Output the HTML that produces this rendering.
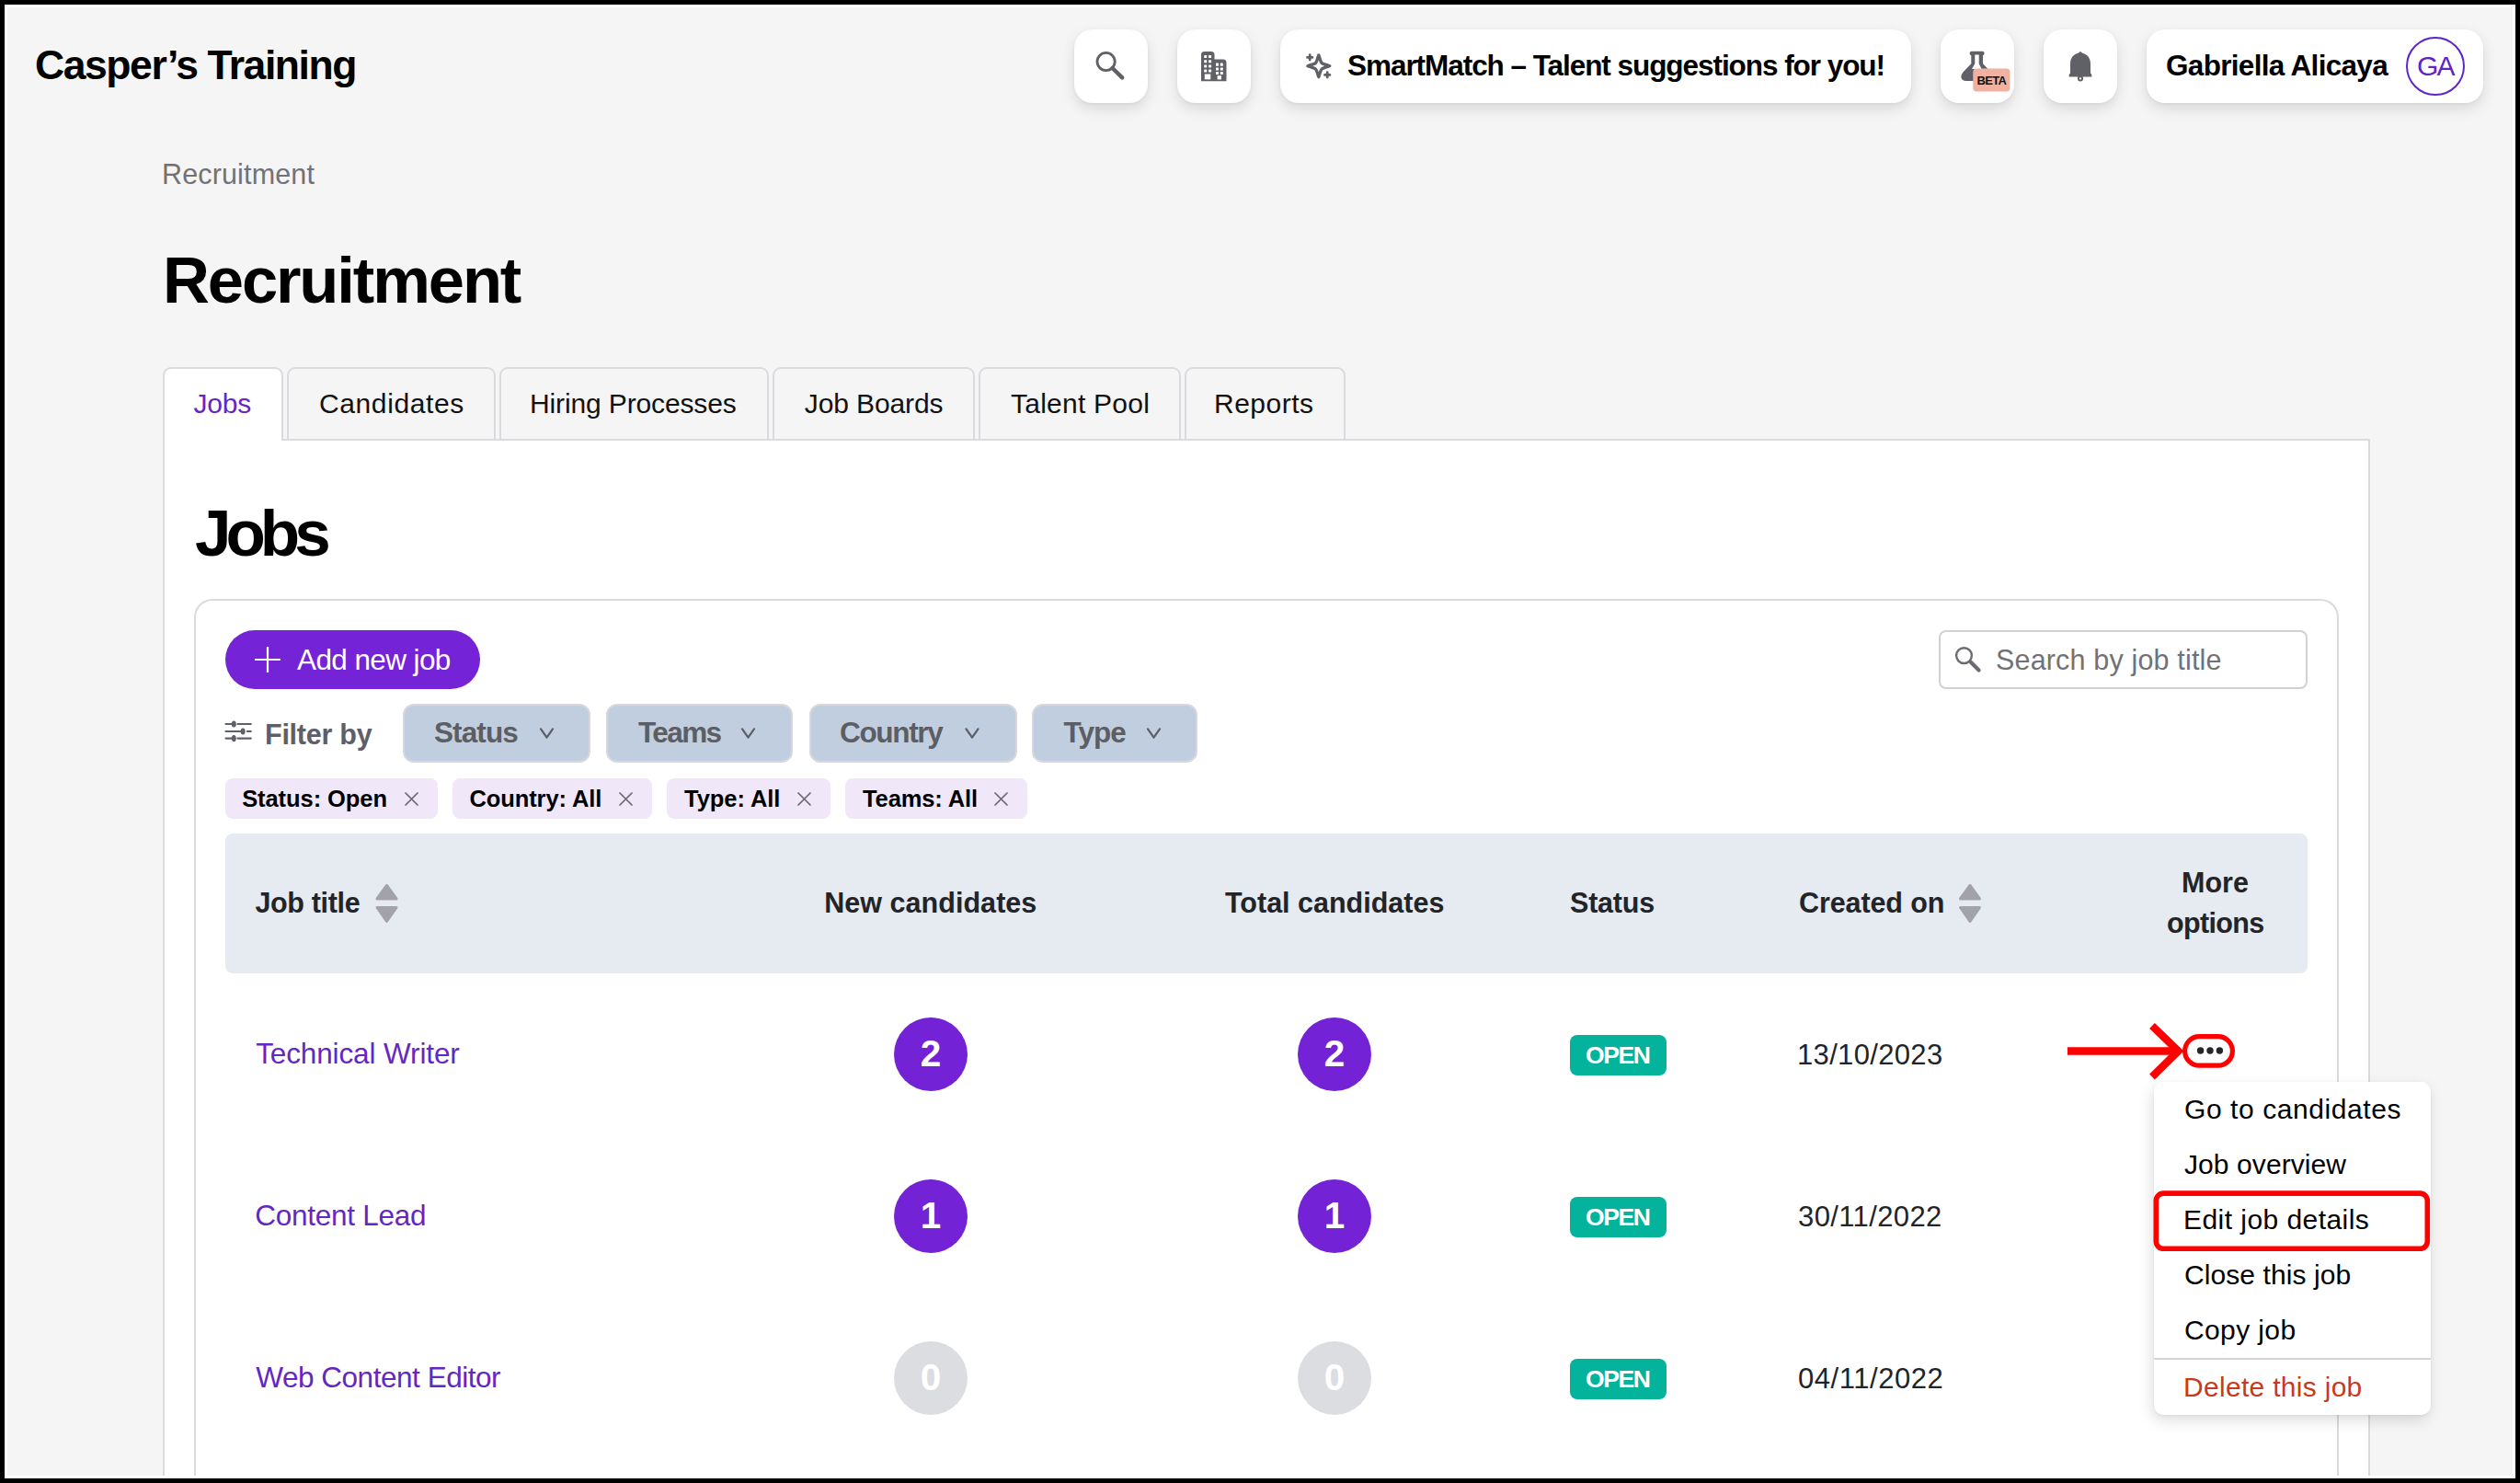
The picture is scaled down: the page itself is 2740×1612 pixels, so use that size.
<!DOCTYPE html>
<html><head><meta charset="utf-8"><title>Recruitment - Jobs</title>
<style>
*{box-sizing:border-box;margin:0;padding:0}
html,body{width:2740px;height:1612px;overflow:hidden;background:#000}
body{position:relative;font-family:"Liberation Sans",sans-serif}
.a{position:absolute}
.t{position:absolute;white-space:nowrap;font-family:"Liberation Sans",sans-serif}
.b{display:inline-block;width:0;height:0;vertical-align:baseline}
#frame{position:absolute;left:5px;top:5px;width:2730px;height:1602px;background:#fff}
#page{position:absolute;left:8px;top:8px;width:2724px;height:1596px;background:#f5f5f5;overflow:hidden}
.hb{position:absolute;top:32px;height:80px;background:#fff;border-radius:20px;box-shadow:0 6px 15px rgba(0,0,0,0.12),0 1px 3px rgba(0,0,0,0.05)}
.tab{position:absolute;top:399px;height:80px;border:2px solid #dadbde;border-bottom:none;border-radius:9px 9px 0 0;background:#f5f5f5}
#panel{position:absolute;left:177px;top:477px;width:2400px;height:1127px;background:#fff;border:2px solid #dadbde;border-bottom:none}
#card{position:absolute;left:211px;top:651px;width:2332px;height:953px;background:#fff;border:2px solid #d9dadd;border-bottom:none;border-radius:20px 20px 0 0}
.dd{position:absolute;top:765px;height:64px;background:#c1cedf;border:2px solid #d5d9df;border-radius:12px}
.chip{position:absolute;top:846px;height:44px;background:#f0e8f8;border-radius:8px}
.circ{position:absolute;width:80px;height:80px;border-radius:40px;background:#7322d6}
.circ.g{background:#dcdde0}
.open{position:absolute;left:1707px;width:105px;height:44px;background:#04b39b;border-radius:8px}
</style></head>
<body>
<div id="frame"></div>
<div id="page"></div>

<!-- header buttons -->
<div class="hb" style="left:1168px;width:80px"></div>
<div class="hb" style="left:1280px;width:80px"></div>
<div class="hb" style="left:1392px;width:686px"></div>
<div class="hb" style="left:2110px;width:80px"></div>
<div class="hb" style="left:2222px;width:80px"></div>
<div class="hb" style="left:2334px;width:366px"></div>

<!-- search icon -->
<svg class="a" style="left:1188px;top:52px" width="40" height="40" viewBox="0 0 40 40">
 <circle cx="14.6" cy="15" r="9.6" fill="none" stroke="#5f6166" stroke-width="2.8"/>
 <line x1="21.5" y1="22" x2="32.2" y2="32.4" stroke="#5f6166" stroke-width="4.4" stroke-linecap="round"/>
</svg>
<!-- building icon -->
<svg class="a" style="left:1306px;top:56px" width="28" height="33" viewBox="0 0 28 33">
 <path d="M0 3.5 Q0 0 3.5 0 H11 Q14.5 0 14.5 3.5 V8.5 H24 Q27.5 8.5 27.5 12 V32.3 H0 Z" fill="#5f6166"/>
 <g fill="#fff">
  <rect x="3.2" y="4" width="3" height="3" rx="0.6"/><rect x="8.1" y="4" width="3" height="3" rx="0.6"/>
  <rect x="3.2" y="9.2" width="3" height="3" rx="0.6"/><rect x="8.1" y="9.2" width="3" height="3" rx="0.6"/>
  <rect x="3.2" y="14.4" width="3" height="3" rx="0.6"/><rect x="8.1" y="14.4" width="3" height="3" rx="0.6"/>
  <rect x="3.2" y="19.6" width="3" height="3" rx="0.6"/><rect x="8.1" y="19.6" width="3" height="3" rx="0.6"/>
  <rect x="3.8" y="24.5" width="6.5" height="5.8"/>
  <rect x="16" y="12.6" width="3" height="3.2" rx="0.5"/><rect x="20.8" y="12.6" width="3" height="3.2" rx="0.5"/>
  <rect x="16" y="17.4" width="3" height="3.2" rx="0.5"/><rect x="20.8" y="17.4" width="3" height="3.2" rx="0.5"/>
  <rect x="16" y="22" width="3" height="3" rx="0.5"/><rect x="20.8" y="22" width="3" height="3" rx="0.5"/>
  <rect x="17.6" y="26.2" width="4.4" height="4.2"/>
 </g>
</svg>
<!-- sparkle icon -->
<svg class="a" style="left:1419px;top:57px" width="30" height="30" viewBox="0 0 30 30">
 <path d="M14.8 2.9 C18.8 14.1 15.5 10.8 26.8 14.8 C15.5 18.8 18.8 15.5 14.8 26.7 C10.8 15.5 14.1 18.8 2.8 14.8 C14.1 10.8 10.8 14.1 14.8 2.9 Z" fill="none" stroke="#5f6166" stroke-width="3.3" stroke-linejoin="round"/>
 <path d="M5.2 2.7 V8.1 M2.5 5.4 H7.9" stroke="#5f6166" stroke-width="2.8" stroke-linecap="round"/>
 <path d="M24.2 21.7 V27.1 M21.5 24.4 H26.9" stroke="#5f6166" stroke-width="2.8" stroke-linecap="round"/>
</svg>
<!-- flask icon -->
<svg class="a" style="left:2132px;top:55px" width="56" height="46" viewBox="0 0 56 46">
 <rect x="9.6" y="0.8" width="16" height="4.4" rx="2.2" fill="#5f6166"/>
 <path d="M11.3 4 H24 V14.3 L31 21.5 V33 H6 Q0.6 33 0.3 28.6 Q0.2 26 2.6 23.2 L11.3 14.3 Z" fill="#5f6166"/>
 <path d="M15.3 4.5 H19.7 V14.3 L22.6 19.9 H12 L15.3 14.3 Z" fill="#fff"/>
 <rect x="13.3" y="19.5" width="40.2" height="25" rx="4" fill="#f0b1a1"/>
</svg>
<!-- bell icon -->
<svg class="a" style="left:2248px;top:54px" width="28" height="36" viewBox="0 0 28 36">
 <path d="M14 2.2 C15 2.2 15.6 2.8 15.7 3.6 C21.6 4.9 25 9.2 25 15.2 V25.5 L26.3 27 V29.6 H1.7 V27 L3 25.5 V15.2 C3 9.2 6.4 4.9 12.3 3.6 C12.4 2.8 13 2.2 14 2.2 Z" fill="#5f6166"/>
 <circle cx="14" cy="31.4" r="2.1" fill="none" stroke="#5f6166" stroke-width="1.9"/>
</svg>
<!-- avatar -->
<div class="a" style="left:2616px;top:40px;width:64px;height:64px;border:2px solid #5f24c6;border-radius:50%"></div>

<!-- tabs -->
<div class="tab" style="left:312px;width:227px"></div>
<div class="tab" style="left:543px;width:293px"></div>
<div class="tab" style="left:840px;width:220px"></div>
<div class="tab" style="left:1064px;width:220px"></div>
<div class="tab" style="left:1288px;width:175px"></div>
<div id="panel"></div>
<div class="tab" style="left:177px;width:131px;height:80px;background:#fff"></div>
<div class="a" style="left:179px;top:470px;width:127px;height:12px;background:#fff"></div>

<div id="card"></div>

<!-- add new job -->
<div class="a" style="left:245px;top:685px;width:277px;height:64px;border-radius:32px;background:#7523d6"></div>
<svg class="a" style="left:276px;top:702px" width="30" height="30" viewBox="0 0 30 30">
 <path d="M15 1 V29 M1 15 H29" stroke="#fff" stroke-width="2.2"/>
</svg>

<!-- search input -->
<div class="a" style="left:2108px;top:685px;width:401px;height:64px;border:2px solid #d0d1d4;border-radius:8px;background:#fff"></div>
<svg class="a" style="left:2124px;top:701px" width="32" height="32" viewBox="0 0 32 32">
 <circle cx="11.5" cy="11.6" r="8.4" fill="none" stroke="#6a6c71" stroke-width="2.4"/>
 <line x1="18.6" y1="18.6" x2="27.6" y2="27.6" stroke="#6a6c71" stroke-width="4.2" stroke-linecap="round"/>
</svg>

<!-- filter icon -->
<svg class="a" style="left:244px;top:782px" width="30" height="26" viewBox="0 0 30 26">
 <g stroke="#5d6066" stroke-width="2.1" stroke-linecap="round"><path d="M1.5 5 H7.6 M14.4 5 H28.8"/><path d="M1.5 13 H17.4 M24.8 13 H28.8"/><path d="M1.5 20.6 H7.6 M14.4 20.6 H28.8"/></g>
 <g fill="#5d6066"><ellipse cx="10.3" cy="5" rx="2.5" ry="3.6"/><ellipse cx="20.1" cy="13" rx="2.5" ry="3.6"/><ellipse cx="10.3" cy="20.6" rx="2.5" ry="3.6"/></g>
</svg>

<!-- chips -->
<div class="chip" style="left:245px;width:231px"></div>
<div class="chip" style="left:492px;width:217px"></div>
<div class="chip" style="left:725px;width:178px"></div>
<div class="chip" style="left:919px;width:198px"></div>

<!-- dropdowns -->
<div class="dd" style="left:438px;width:204px"></div>
<div class="dd" style="left:659px;width:203px"></div>
<div class="dd" style="left:880px;width:226px"></div>
<div class="dd" style="left:1122px;width:180px"></div>
<svg class="a" style="left:0;top:0" width="2740" height="1612" viewBox="0 0 2740 1612">
 <g fill="none" stroke="#5b5e64" stroke-width="2.2" stroke-linecap="round" stroke-linejoin="round">
  <path d="M588 792.4 L594.5 801.7 L601 792.4"/>
  <path d="M807 792.4 L813.5 801.7 L820 792.4"/>
  <path d="M1050.5 792.4 L1057 801.7 L1063.5 792.4"/>
  <path d="M1248 792.4 L1254.5 801.7 L1261 792.4"/>
 </g>
 <g fill="none" stroke="#6a6870" stroke-width="1.7" stroke-linecap="round">
  <path d="M441 862 L454 875 M454 862 L441 875"/>
  <path d="M674 862 L687 875 M687 862 L674 875"/>
  <path d="M868 862 L881 875 M881 862 L868 875"/>
  <path d="M1082 862 L1095 875 M1095 862 L1082 875"/>
 </g>
</svg>

<!-- table header -->
<div class="a" style="left:245px;top:906px;width:2264px;height:152px;background:#e6eaf1;border-radius:8px"></div>
<svg class="a" style="left:0;top:0" width="2740" height="1612" viewBox="0 0 2740 1612">
 <g fill="#a2a3a8" stroke="#a2a3a8" stroke-width="3" stroke-linejoin="round">
  <path d="M420.5 962.5 L431 977 L410 977 Z"/><path d="M410 986.5 L431 986.5 L420.5 1001.5 Z"/>
  <path d="M2142 962.5 L2152.5 977 L2131.5 977 Z"/><path d="M2131.5 986.5 L2152.5 986.5 L2142 1001.5 Z"/>
 </g>
</svg>

<!-- rows -->
<div class="circ" style="left:972px;top:1106px"></div>
<div class="circ" style="left:1411px;top:1106px"></div>
<div class="open" style="top:1125px"></div>
<div class="circ" style="left:972px;top:1282px"></div>
<div class="circ" style="left:1411px;top:1282px"></div>
<div class="open" style="top:1301px"></div>
<div class="circ g" style="left:972px;top:1458px"></div>
<div class="circ g" style="left:1411px;top:1458px"></div>
<div class="open" style="top:1477px"></div>

<!-- menu -->
<div class="a" style="left:2342px;top:1176px;width:301px;height:362px;background:#fff;border-radius:10px;box-shadow:-2px 6px 16px rgba(0,0,0,0.13),0 1px 3px rgba(0,0,0,0.06)"></div>
<div class="a" style="left:2342px;top:1476px;width:301px;height:2px;background:#d3d5da"></div>

<!-- annotations -->
<svg class="a" style="left:0;top:0" width="2740" height="1612" viewBox="0 0 2740 1612">
 <g fill="none" stroke="#ff0000">
  <path d="M2248 1142.5 H2366" stroke-width="8.3"/>
  <path d="M2340 1115 L2368.5 1142.5 L2340 1170.5" stroke-width="8.3"/>
  <rect x="2375.6" y="1126.6" width="51.8" height="31.6" rx="15.8" stroke-width="5.2"/>
  <rect x="2344.3" y="1297.1" width="295" height="60.2" rx="8" stroke-width="5.6"/>
 </g>
 <g fill="#24262a"><circle cx="2392.6" cy="1142" r="3.7"/><circle cx="2403" cy="1142" r="3.7"/><circle cx="2413.4" cy="1142" r="3.7"/></g>
</svg>

<div class="t" id="brand" style="left:38.00px;top:49.00px;font-size:44.5px;line-height:44.5px;font-weight:700;color:#000;letter-spacing:-1.438px"><i class="b"></i>Casper’s Training</div>
<div class="t" id="smart" style="left:1465.00px;top:56.20px;font-size:31.5px;line-height:31.5px;font-weight:700;color:#000;letter-spacing:-1.051px"><i class="b"></i>SmartMatch – Talent suggestions for you!</div>
<div class="t" id="user" style="left:2355.00px;top:56.20px;font-size:31.5px;line-height:31.5px;font-weight:700;color:#000;letter-spacing:-0.688px"><i class="b"></i>Gabriella Alicaya</div>
<div class="t" id="ga" style="left:2628.00px;top:56.80px;font-size:30.0px;line-height:30.0px;font-weight:400;color:#5f24c6;letter-spacing:-1.800px"><i class="b"></i>GA</div>
<div class="t" id="beta" style="left:2149.50px;top:81.00px;font-size:13.0px;line-height:13.0px;font-weight:700;color:#111;letter-spacing:-0.700px"><i class="b"></i>BETA</div>
<div class="t" id="bc" style="left:176.00px;top:174.01px;font-size:30.5px;line-height:30.5px;font-weight:400;color:#707277;letter-spacing:0.150px"><i class="b"></i>Recruitment</div>
<div class="t" id="h1" style="left:177.00px;top:270.01px;font-size:70.5px;line-height:70.5px;font-weight:700;color:#000;letter-spacing:-2.100px"><i class="b"></i>Recruitment</div>
<div class="t" id="tab1" style="left:210.60px;top:424.41px;font-size:30.0px;line-height:30.0px;font-weight:400;color:#6427c2;letter-spacing:-0.233px"><i class="b"></i>Jobs</div>
<div class="t" id="tab2" style="left:347.00px;top:424.41px;font-size:30.0px;line-height:30.0px;font-weight:400;color:#111;letter-spacing:0.611px"><i class="b"></i>Candidates</div>
<div class="t" id="tab3" style="left:576.00px;top:424.41px;font-size:30.0px;line-height:30.0px;font-weight:400;color:#111;letter-spacing:-0.133px"><i class="b"></i>Hiring Processes</div>
<div class="t" id="tab4" style="left:874.80px;top:424.41px;font-size:30.0px;line-height:30.0px;font-weight:400;color:#111;letter-spacing:-0.122px"><i class="b"></i>Job Boards</div>
<div class="t" id="tab5" style="left:1099.00px;top:424.41px;font-size:30.0px;line-height:30.0px;font-weight:400;color:#111;letter-spacing:0.240px"><i class="b"></i>Talent Pool</div>
<div class="t" id="tab6" style="left:1320.00px;top:424.41px;font-size:30.0px;line-height:30.0px;font-weight:400;color:#111;letter-spacing:0.500px"><i class="b"></i>Reports</div>
<div class="t" id="h2" style="left:212.00px;top:544.01px;font-size:71.0px;line-height:71.0px;font-weight:700;color:#000;letter-spacing:-6.000px"><i class="b"></i>Jobs</div>
<div class="t" id="addjob" style="left:323.00px;top:701.51px;font-size:31.5px;line-height:31.5px;font-weight:400;color:#fff;letter-spacing:-0.600px"><i class="b"></i>Add new job</div>
<div class="t" id="search" style="left:2170.00px;top:702.01px;font-size:30.5px;line-height:30.5px;font-weight:400;color:#707277;letter-spacing:0.167px"><i class="b"></i>Search by job title</div>
<div class="t" id="filterby" style="left:288.00px;top:783.01px;font-size:30.5px;line-height:30.5px;font-weight:700;color:#5d6066;letter-spacing:-0.250px"><i class="b"></i>Filter by</div>
<div class="t" id="dd1" style="left:472.00px;top:781.01px;font-size:31.5px;line-height:31.5px;font-weight:700;color:#5b5e64;letter-spacing:-0.900px"><i class="b"></i>Status</div>
<div class="t" id="dd2" style="left:694.00px;top:781.01px;font-size:31.5px;line-height:31.5px;font-weight:700;color:#5b5e64;letter-spacing:-1.600px"><i class="b"></i>Teams</div>
<div class="t" id="dd3" style="left:913.00px;top:781.01px;font-size:31.5px;line-height:31.5px;font-weight:700;color:#5b5e64;letter-spacing:-1.333px"><i class="b"></i>Country</div>
<div class="t" id="dd4" style="left:1156.40px;top:781.01px;font-size:31.5px;line-height:31.5px;font-weight:700;color:#5b5e64;letter-spacing:-0.900px"><i class="b"></i>Type</div>
<div class="t" id="chip1" style="left:263.20px;top:855.51px;font-size:25.5px;line-height:25.5px;font-weight:700;color:#000;letter-spacing:-0.082px"><i class="b"></i>Status: Open</div>
<div class="t" id="chip2" style="left:510.40px;top:855.51px;font-size:25.5px;line-height:25.5px;font-weight:700;color:#000;letter-spacing:-0.091px"><i class="b"></i>Country: All</div>
<div class="t" id="chip3" style="left:744.00px;top:855.51px;font-size:25.5px;line-height:25.5px;font-weight:700;color:#000;letter-spacing:-0.050px"><i class="b"></i>Type: All</div>
<div class="t" id="chip4" style="left:938.00px;top:855.51px;font-size:25.5px;line-height:25.5px;font-weight:700;color:#000;letter-spacing:-0.111px"><i class="b"></i>Teams: All</div>
<div class="t" id="th1" style="left:277.40px;top:966.01px;font-size:30.5px;line-height:30.5px;font-weight:700;color:#222428;letter-spacing:-0.325px"><i class="b"></i>Job title</div>
<div class="t" id="th2" style="left:896.20px;top:966.01px;font-size:30.5px;line-height:30.5px;font-weight:700;color:#222428;letter-spacing:0.046px"><i class="b"></i>New candidates</div>
<div class="t" id="th3" style="left:1332.00px;top:966.01px;font-size:30.5px;line-height:30.5px;font-weight:700;color:#222428;letter-spacing:0.000px"><i class="b"></i>Total candidates</div>
<div class="t" id="th4" style="left:1707.00px;top:966.01px;font-size:30.5px;line-height:30.5px;font-weight:700;color:#222428;letter-spacing:-0.200px"><i class="b"></i>Status</div>
<div class="t" id="th5" style="left:1956.00px;top:966.01px;font-size:30.5px;line-height:30.5px;font-weight:700;color:#222428;letter-spacing:-0.111px"><i class="b"></i>Created on</div>
<div class="t" id="th6a" style="left:2372.00px;top:944.01px;font-size:30.5px;line-height:30.5px;font-weight:700;color:#222428;letter-spacing:0.000px"><i class="b"></i>More</div>
<div class="t" id="th6b" style="left:2356.00px;top:988.01px;font-size:30.5px;line-height:30.5px;font-weight:700;color:#222428;letter-spacing:-0.667px"><i class="b"></i>options</div>
<div class="t" id="title0" style="left:278.20px;top:1130.01px;font-size:31.5px;line-height:31.5px;font-weight:400;color:#6427c2;letter-spacing:-0.127px"><i class="b"></i>Technical Writer</div>
<div class="t" id="open0" style="left:1724.00px;top:1134.01px;font-size:26.5px;line-height:26.5px;font-weight:700;color:#fff;letter-spacing:-1.400px"><i class="b"></i>OPEN</div>
<div class="t" id="date0" style="left:1954.00px;top:1130.71px;font-size:31.0px;line-height:31.0px;font-weight:400;color:#222428;letter-spacing:0.333px"><i class="b"></i>13/10/2023</div>
<div class="t" id="n1_0" style="left:972.00px;width:80px;text-align:center;top:1125.00px;font-size:40.5px;line-height:40.5px;font-weight:700;color:#fff;letter-spacing:0.000px"><i class="b"></i>2</div>
<div class="t" id="n2_0" style="left:1411.00px;width:80px;text-align:center;top:1125.00px;font-size:40.5px;line-height:40.5px;font-weight:700;color:#fff;letter-spacing:0.000px"><i class="b"></i>2</div>
<div class="t" id="title1" style="left:277.20px;top:1306.01px;font-size:31.5px;line-height:31.5px;font-weight:400;color:#6427c2;letter-spacing:-0.264px"><i class="b"></i>Content Lead</div>
<div class="t" id="open1" style="left:1724.00px;top:1310.01px;font-size:26.5px;line-height:26.5px;font-weight:700;color:#fff;letter-spacing:-1.400px"><i class="b"></i>OPEN</div>
<div class="t" id="date1" style="left:1955.00px;top:1306.71px;font-size:31.0px;line-height:31.0px;font-weight:400;color:#222428;letter-spacing:0.389px"><i class="b"></i>30/11/2022</div>
<div class="t" id="n1_1" style="left:972.00px;width:80px;text-align:center;top:1301.00px;font-size:40.5px;line-height:40.5px;font-weight:700;color:#fff;letter-spacing:0.000px"><i class="b"></i>1</div>
<div class="t" id="n2_1" style="left:1411.00px;width:80px;text-align:center;top:1301.00px;font-size:40.5px;line-height:40.5px;font-weight:700;color:#fff;letter-spacing:0.000px"><i class="b"></i>1</div>
<div class="t" id="title2" style="left:278.20px;top:1482.01px;font-size:31.5px;line-height:31.5px;font-weight:400;color:#6427c2;letter-spacing:-0.465px"><i class="b"></i>Web Content Editor</div>
<div class="t" id="open2" style="left:1724.00px;top:1486.01px;font-size:26.5px;line-height:26.5px;font-weight:700;color:#fff;letter-spacing:-1.400px"><i class="b"></i>OPEN</div>
<div class="t" id="date2" style="left:1955.00px;top:1482.71px;font-size:31.0px;line-height:31.0px;font-weight:400;color:#222428;letter-spacing:0.556px"><i class="b"></i>04/11/2022</div>
<div class="t" id="n1_2" style="left:972.00px;width:80px;text-align:center;top:1477.00px;font-size:40.5px;line-height:40.5px;font-weight:700;color:#fff;letter-spacing:0.000px"><i class="b"></i>0</div>
<div class="t" id="n2_2" style="left:1411.00px;width:80px;text-align:center;top:1477.00px;font-size:40.5px;line-height:40.5px;font-weight:700;color:#fff;letter-spacing:0.000px"><i class="b"></i>0</div>
<div class="t" id="m1" style="left:2375.00px;top:1190.91px;font-size:30.0px;line-height:30.0px;font-weight:400;color:#000;letter-spacing:0.573px"><i class="b"></i>Go to candidates</div>
<div class="t" id="m2" style="left:2375.00px;top:1251.10px;font-size:30.0px;line-height:30.0px;font-weight:400;color:#000;letter-spacing:0.082px"><i class="b"></i>Job overview</div>
<div class="t" id="m3" style="left:2374.00px;top:1311.00px;font-size:30.0px;line-height:30.0px;font-weight:400;color:#000;letter-spacing:0.447px"><i class="b"></i>Edit job details</div>
<div class="t" id="m4" style="left:2375.00px;top:1370.91px;font-size:30.0px;line-height:30.0px;font-weight:400;color:#000;letter-spacing:0.077px"><i class="b"></i>Close this job</div>
<div class="t" id="m5" style="left:2375.00px;top:1431.30px;font-size:30.0px;line-height:30.0px;font-weight:400;color:#000;letter-spacing:0.386px"><i class="b"></i>Copy job</div>
<div class="t" id="m6" style="left:2374.00px;top:1492.60px;font-size:30.0px;line-height:30.0px;font-weight:400;color:#c83a1a;letter-spacing:0.300px"><i class="b"></i>Delete this job</div>
</body></html>
